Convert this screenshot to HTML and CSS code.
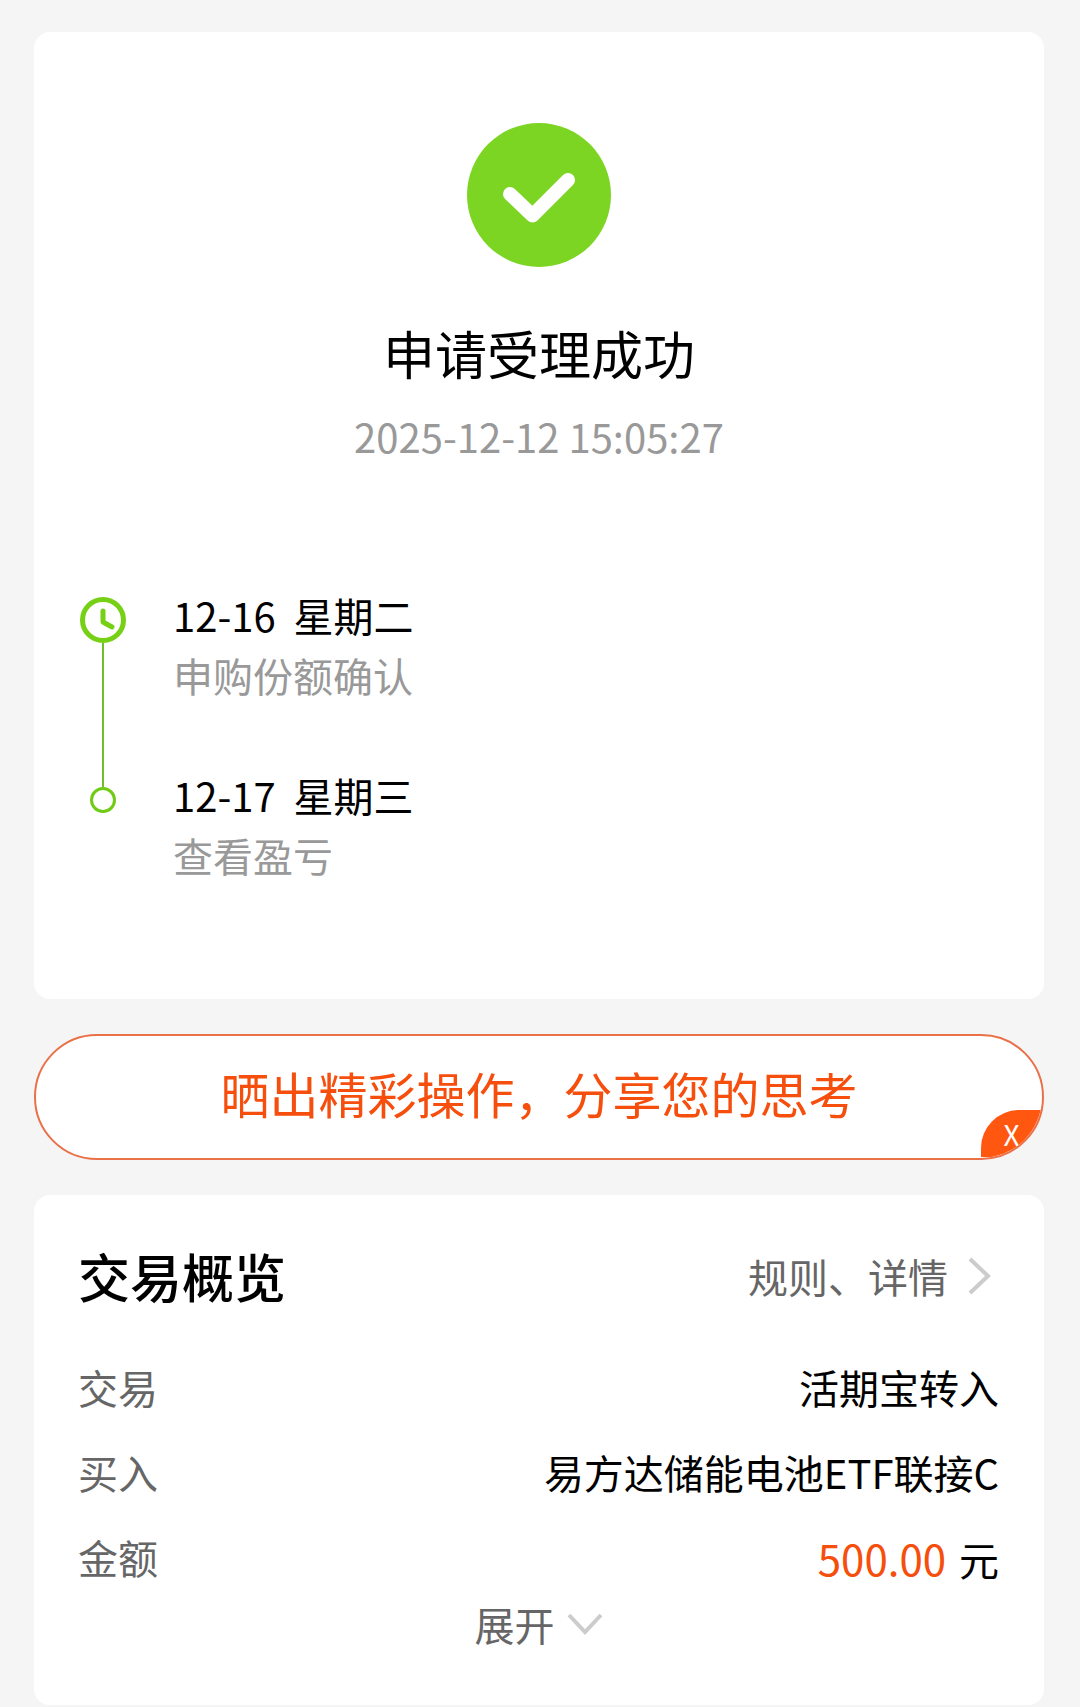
FILE: index.html
```html
<!DOCTYPE html>
<html lang="zh-CN">
<head>
    <meta charset="UTF-8">
    <meta name="viewport" content="width=device-width, initial-scale=1.0">
    <title>申请受理成功</title>
    <link rel="stylesheet" href="styles.css">
</head>
<body>
<section class="card result">
    <svg class="result-icon" viewBox="0 0 144 144" aria-hidden="true">
        <circle cx="72" cy="72" r="72" fill="#7cd522"/>
        <path d="M43 71 L65.500 92.500 L101 57" fill="none" stroke="#fff" stroke-width="14" stroke-linecap="round" stroke-linejoin="round"/>
    </svg>
    <h1>申请受理成功</h1>
    <p class="result-time">2025-12-12 15:05:27</p>

    <ol class="timeline">
        <li>
            <div class="marker">
                <svg class="clock" viewBox="0 0 46 46" aria-hidden="true">
                    <circle cx="23" cy="23" r="20.500" fill="none" stroke="#76d015" stroke-width="5"/>
                    <path d="M23 14 V25 L32 30" fill="none" stroke="#76d015" stroke-width="5" stroke-linecap="round" stroke-linejoin="round"/>
                </svg>
                <span class="line"></span>
            </div>
            <div class="step">
                <p class="step-date">12-16&nbsp; 星期二</p>
                <p class="step-text">申购份额确认</p>
            </div>
        </li>
        <li>
            <div class="marker last">
                <span class="line"></span>
                <span class="dot"></span>
            </div>
            <div class="step">
                <p class="step-date">12-17&nbsp; 星期三</p>
                <p class="step-text">查看盈亏</p>
            </div>
        </li>
    </ol>
</section>

<div class="share">
    <a class="share-link" href="#">晒出精彩操作，分享您的思考</a>
    <button class="share-close" type="button" aria-label="关闭">X</button>
</div>

<section class="card overview">
    <div class="overview-head">
        <h2>交易概览</h2>
        <a class="rules" href="#">规则、详情
            <svg class="arrow-right" viewBox="0 0 24 40" aria-hidden="true">
                <path d="M3 3 L21 20 L3 37" fill="none" stroke="#ccc" stroke-width="4"/>
            </svg>
        </a>
    </div>
    <dl>
        <div class="row">
            <dt>交易</dt>
            <dd>活期宝转入</dd>
        </div>
        <div class="row">
            <dt>买入</dt>
            <dd>易方达储能电池ETF联接C</dd>
        </div>
        <div class="row">
            <dt>金额</dt>
            <dd><span class="amount">500.00</span> 元</dd>
        </div>
    </dl>
    <button class="expand" type="button">展开
        <svg class="arrow-down" viewBox="0 0 36 22" aria-hidden="true">
            <path d="M2 2 L18 19 L34 2" fill="none" stroke="#ccc" stroke-width="4"/>
        </svg>
    </button>
</section>
</body>
</html>
```

FILE: styles.css
```css
* {
    box-sizing: border-box;
}

body {
    margin: 0;
    padding: 32px 36px 2px 34px;
    display: flex;
    flex-direction: column;
    gap: 35px;
    background-color: #f5f5f5;
    color: #000;
    font-family: "Noto Sans CJK SC", sans-serif;
    font-size: 40px;
    line-height: 60px;
}

h1, h2, p, ol, dl, dd {
    margin: 0;
    padding: 0;
}

h1, h2 {
    font-size: 52px;
    line-height: 72px;
}

a {
    text-decoration: none;
}

button {
    padding: 0;
    border: none;
    background: none;
    font: inherit;
    cursor: pointer;
}

svg {
    display: block;
}

.card {
    background-color: #fff;
    border-radius: 16px;
}

/* result */
.result {
    padding: 91px 46px 114px;
    display: flex;
    flex-direction: column;
    align-items: center;
}

.result-icon {
    width: 144px;
    height: 144px;
}

h1 {
    margin-top: 50px;
    font-weight: 400;
}

.result-time {
    margin-top: 17px;
    color: #999;
}

.timeline {
    align-self: stretch;
    margin-top: 119px;
    list-style: none;
}

.timeline li {
    display: flex;
    gap: 47px;
}

.timeline li:first-child .step {
    padding-bottom: 60px;
}

.step-text {
    color: #999;
}

.marker {
    width: 46px;
    padding-top: 12px;
    display: flex;
    flex-direction: column;
    align-items: center;
}

.clock {
    width: 46px;
    height: 46px;
}

.line {
    flex: 1;
    width: 2px;
    background-color: #6cc02c;
}

.marker.last {
    padding-top: 0;
}

.marker.last .line {
    flex: none;
    height: 22px;
}

.dot {
    width: 26px;
    height: 26px;
    border: 3px solid #6fcb15;
    border-radius: 50%;
}

/* share */
.share {
    position: relative;
    overflow: hidden;
    border: 2px solid #ea7048;
    border-radius: 63px;
    background-color: #fff;
}

.share-link {
    display: block;
    padding: 21px 0 29px;
    color: #f64e0c;
    font-size: 49px;
    line-height: 72px;
    text-align: center;
}

.share-close {
    position: absolute;
    right: 0;
    bottom: 1px;
    width: 61px;
    height: 47px;
    border-radius: 38px 0 0 0;
    background-color: #ff5710;
    color: #fff;
    font-size: 28px;
    line-height: 46px;
}

/* overview */
.overview {
    padding: 45px 45px 59px 44px;
}

.overview-head {
    display: flex;
    justify-content: space-between;
    align-items: center;
}

h2 {
    font-weight: 500;
}

.rules {
    display: flex;
    align-items: center;
    gap: 19px;
    padding-right: 8px;
    color: #666;
}

.arrow-right {
    width: 24px;
    height: 40px;
}

dl {
    margin-top: 33px;
}

.row {
    display: flex;
    justify-content: space-between;
    line-height: 85px;
}

dt {
    color: #666;
}

.amount {
    margin-right: 4px;
    color: #f64e0c;
    font-size: 42px;
}

.expand {
    display: flex;
    align-items: center;
    gap: 12px;
    margin: 0 auto;
    color: #666;
    line-height: 44px;
}

.arrow-down {
    width: 36px;
    height: 22px;
}
```
